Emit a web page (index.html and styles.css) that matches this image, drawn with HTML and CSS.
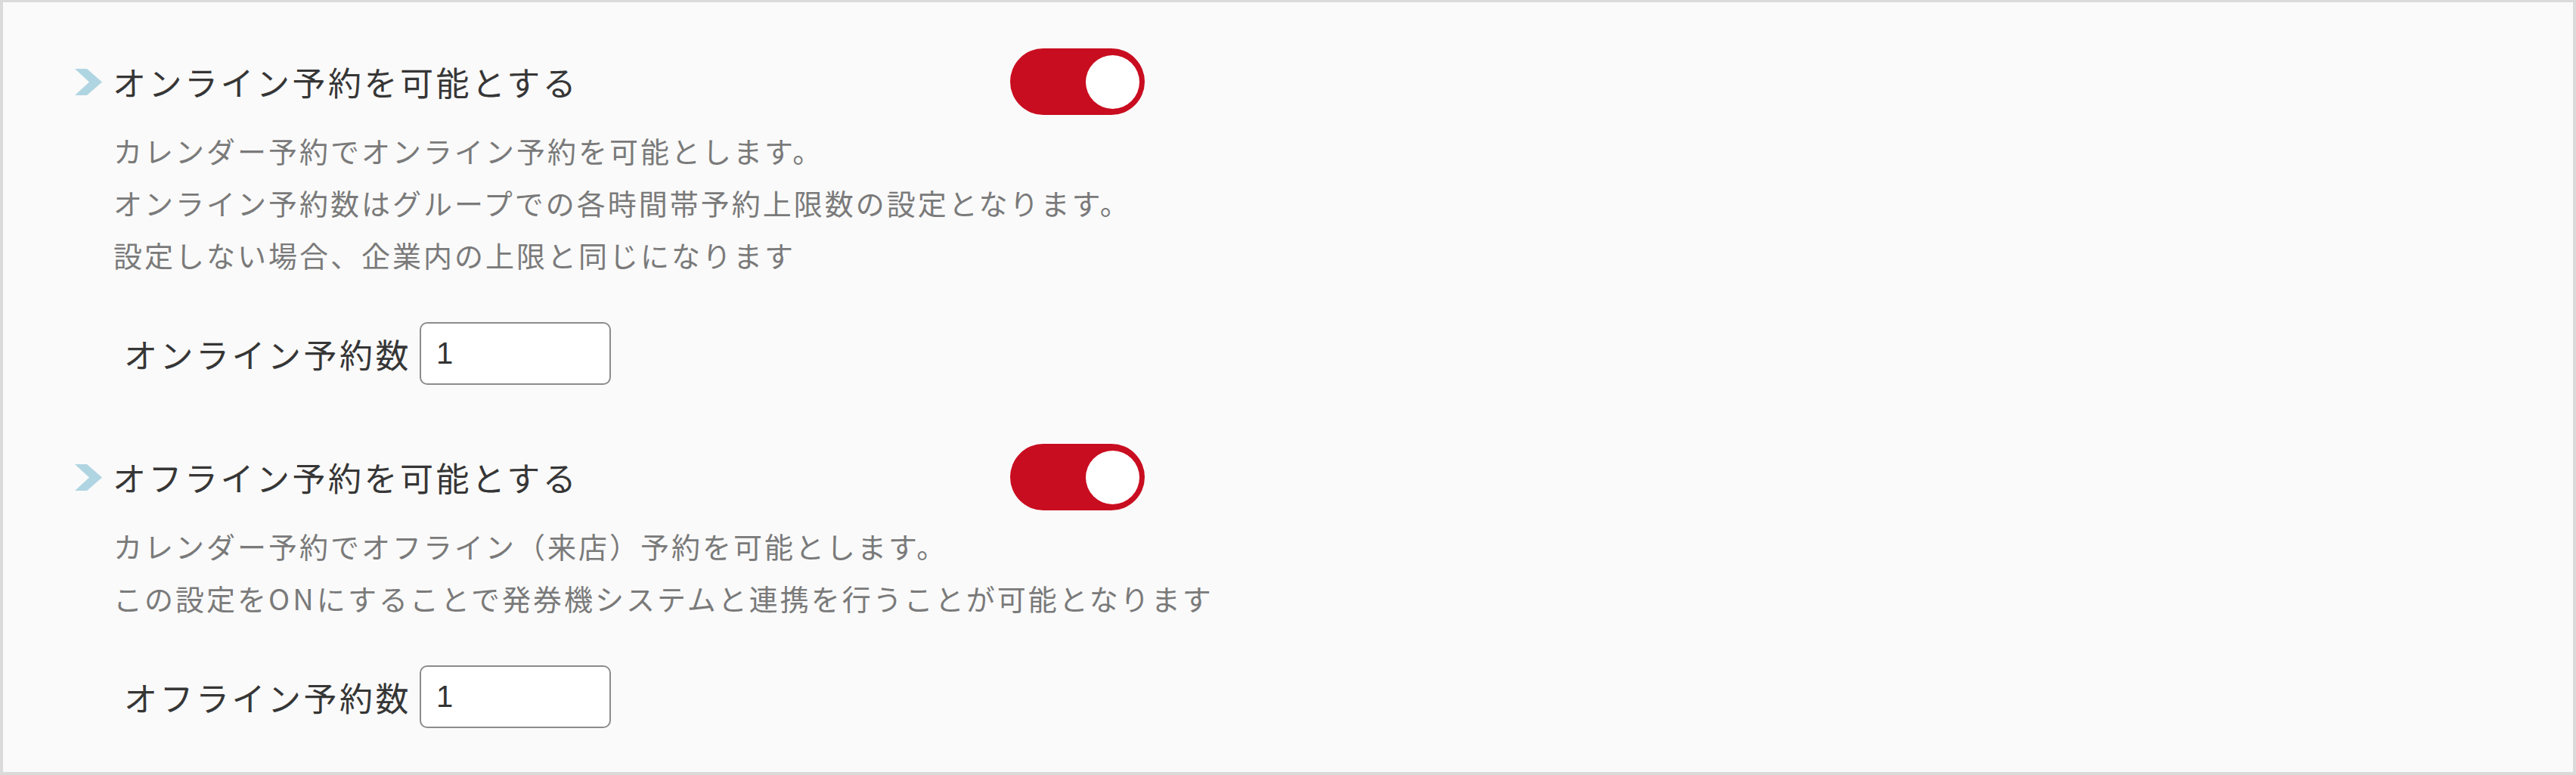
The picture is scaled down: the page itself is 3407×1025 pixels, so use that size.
FILE: index.html
```html
<!DOCTYPE html>
<html lang="ja">
<head>
<meta charset="utf-8">
<title>予約設定</title>
<link rel="stylesheet" href="styles.css">
</head>
<body>
<div class="panel">
  <section class="setting">
    <div class="setting-head">
      <h2 class="setting-title">
        <svg class="chevron" viewBox="0 0 36 35" aria-hidden="true"><polygon points="0,0 16,0 36,17.5 16,35 0,35 19,17.5"/></svg>
        <span>オンライン予約を可能とする</span>
      </h2>
      <span class="switch is-on" role="switch" aria-checked="true"><span class="switch-thumb"></span></span>
    </div>
    <p class="setting-desc">カレンダー予約でオンライン予約を可能とします。<br>オンライン予約数はグループでの各時間帯予約上限数の設定となります。<br>設定しない場合、企業内の上限と同じになります</p>
    <div class="setting-field">
      <label class="field-label" for="online-count">オンライン予約数</label>
      <input class="count-input" id="online-count" type="text" value="1">
    </div>
  </section>

  <section class="setting">
    <div class="setting-head">
      <h2 class="setting-title">
        <svg class="chevron" viewBox="0 0 36 35" aria-hidden="true"><polygon points="0,0 16,0 36,17.5 16,35 0,35 19,17.5"/></svg>
        <span>オフライン予約を可能とする</span>
      </h2>
      <span class="switch is-on" role="switch" aria-checked="true"><span class="switch-thumb"></span></span>
    </div>
    <p class="setting-desc">カレンダー予約でオフライン（来店）予約を可能とします。<br>この設定を<span class="latin">ON</span>にすることで発券機システムと連携を行うことが可能となります</p>
    <div class="setting-field">
      <label class="field-label" for="offline-count">オフライン予約数</label>
      <input class="count-input" id="offline-count" type="text" value="1">
    </div>
  </section>
</div>
</body>
</html>
```
FILE: styles.css
```css
html, body {
  margin: 0;
  padding: 0;
  background: #fafafa;
}

body {
  font-family: "Noto Sans CJK JP", "Noto Sans", sans-serif;
  color: #333;
}

.panel {
  box-sizing: border-box;
  width: 100%;
  height: 1025px;
  border: 4px solid #dadada;
  border-top-width: 3px;
  background: #fafafa;
  padding: 61px 0 0 95px;
  display: flex;
  flex-direction: column;
  gap: 78px;
}

.setting {
  display: flex;
  flex-direction: column;
}

.setting-head {
  display: grid;
  grid-template-columns: 1237px 178px;
  align-items: center;
  height: 88px;
}

.setting-title {
  margin: 0;
  display: flex;
  align-items: center;
  gap: 14px;
  font-size: 44px;
  font-weight: 400;
  letter-spacing: 3.5px;
  line-height: 1;
  color: #363636;
}

.chevron {
  width: 36px;
  height: 35px;
  flex: none;
  fill: #b0d5e2;
}

.switch {
  box-sizing: border-box;
  width: 178px;
  height: 88px;
  border-radius: 44px;
  background: #c90d20;
  display: flex;
  align-items: center;
  justify-content: flex-end;
  padding-right: 7px;
}

.switch-thumb {
  width: 71px;
  height: 71px;
  border-radius: 50%;
  background: #fff;
}

.setting-desc {
  margin: 12px 0 0 51px;
  font-size: 38px;
  letter-spacing: 3px;
  line-height: 69px;
  color: #7a7a7a;
}

.latin {
  letter-spacing: 4px;
}

.setting-field {
  margin: 55px 0 0 65px;
  display: flex;
  align-items: center;
  gap: 11px;
}

.field-label {
  font-size: 44px;
  letter-spacing: 3.5px;
  color: #363636;
}

.count-input {
  box-sizing: border-box;
  width: 253px;
  height: 83px;
  border: 2px solid #8c8c8c;
  border-radius: 10px;
  background: #fff;
  padding: 0 0 0 20px;
  font-family: "Liberation Sans", Arial, sans-serif;
  font-size: 40px;
  color: #333;
  outline: none;
}
```
